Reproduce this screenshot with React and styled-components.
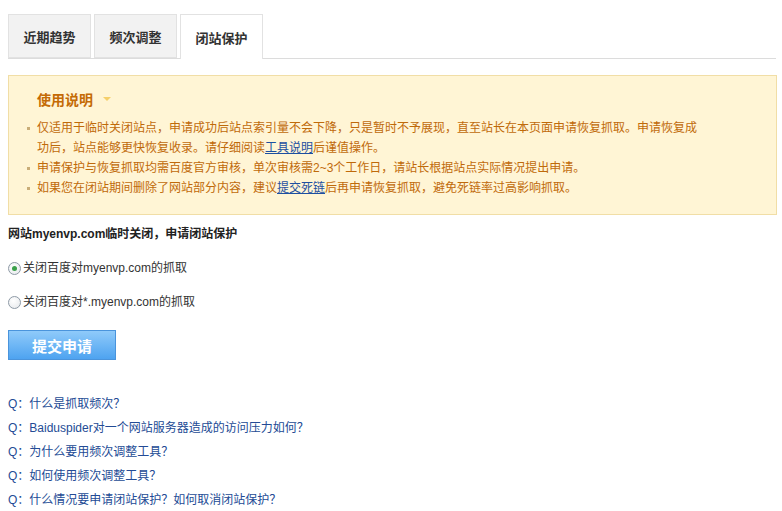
import React, { useState } from "react";
import styled, { createGlobalStyle } from "styled-components";

const GlobalStyle = createGlobalStyle`
  body {
    margin: 0;
    background: #fff;
    font-family: "Liberation Sans", "Noto Sans CJK SC", sans-serif;
    font-size: 12px;
    color: #333;
  }
`;

const Page = styled.div`
  padding: 14px 5px 0 8px;
`;

const TabBar = styled.div`
  display: flex;
  gap: 3px;
  height: 44px;
  border-bottom: 1px solid #dcdcdc;
  margin-right: 1px;
`;

const Tab = styled.div`
  width: 83px;
  height: ${(p) => (p.active ? "45px" : "44px")};
  box-sizing: border-box;
  display: flex;
  align-items: center;
  justify-content: center;
  background: ${(p) => (p.active ? "#fff" : "#f2f2f2")};
  border: 1px solid #e2e2e2;
  border-bottom: ${(p) => (p.active ? "none" : "1px solid #e2e2e2")};
  font-size: 13px;
  font-weight: bold;
  color: #333;
  cursor: pointer;
`;

const Notice = styled.div`
  margin-top: 16px;
  background: #fff5d5;
  border: 1px solid #f1dea6;
  padding: 11px 0 16px 17px;
`;

const NoticeTitle = styled.div`
  display: flex;
  align-items: center;
  gap: 10px;
  padding-left: 11px;
  height: 24px;
  font-size: 14px;
  font-weight: bold;
  color: #c46a05;
`;

const Arrow = styled.span`
  width: 0;
  height: 0;
  border-left: 4px solid transparent;
  border-right: 4px solid transparent;
  border-top: 4px solid #f5cf6a;
`;

const NoticeList = styled.ul`
  list-style: none;
  margin: 7px 0 0;
  padding: 0 0 0 11px;
  width: 666px;
`;

const NoticeItem = styled.li`
  position: relative;
  line-height: 20px;
  color: #bf6a0a;
  &::before {
    content: "";
    position: absolute;
    left: -10px;
    top: 9px;
    width: 3px;
    height: 3px;
    background: #c9ad78;
  }
`;

const Link = styled.a`
  color: #1d4fa0;
  text-decoration: underline;
`;

const Heading = styled.div`
  margin-top: 11px;
  font-weight: bold;
  color: #222;
  line-height: 16px;
`;

const Options = styled.div`
  margin-top: 18px;
  display: flex;
  flex-direction: column;
  gap: 18px;
`;

const Option = styled.label`
  display: flex;
  align-items: center;
  gap: 2px;
  height: 16px;
  line-height: 16px;
  color: #333;
  cursor: pointer;
`;

const RadioDot = styled.span`
  width: 11px;
  height: 11px;
  border-radius: 50%;
  border: 1px solid #8e9aa6;
  background: radial-gradient(circle at 40% 35%, #fff, #e4e7ea);
  display: flex;
  align-items: center;
  justify-content: center;
  &::after {
    content: "";
    width: 5px;
    height: 5px;
    border-radius: 50%;
    background: ${(p) => (p.checked ? "#3aa04a" : "transparent")};
  }
`;

const SubmitButton = styled.button`
  display: block;
  margin-top: 20px;
  width: 108px;
  height: 30px;
  border: 1px solid #4a94dc;
  background: linear-gradient(#8fcafa, #4ea3f0);
  color: #fff;
  font-family: "Noto Sans CJK SC", sans-serif;
  font-size: 15px;
  font-weight: bold;
  cursor: pointer;
`;

const FaqList = styled.div`
  margin-top: 32px;
  display: flex;
  flex-direction: column;
`;

const FaqLink = styled.a`
  line-height: 24px;
  color: #234b95;
  text-decoration: none;
`;

const faqs = [
  "Q：什么是抓取频次？",
  "Q：Baiduspider对一个网站服务器造成的访问压力如何？",
  "Q：为什么要用频次调整工具？",
  "Q：如何使用频次调整工具？",
  "Q：什么情况要申请闭站保护？如何取消闭站保护？",
];

const App = () => {
  const [choice, setChoice] = useState(0);
  const tabs = ["近期趋势", "频次调整", "闭站保护"];

  return (
    <Page>
      <GlobalStyle />
      <TabBar>
        {tabs.map((t, i) => (
          <Tab key={t} active={i === 2}>
            {t}
          </Tab>
        ))}
      </TabBar>

      <Notice>
        <NoticeTitle>
          使用说明
          <Arrow />
        </NoticeTitle>
        <NoticeList>
          <NoticeItem>
            仅适用于临时关闭站点，申请成功后站点索引量不会下降，只是暂时不予展现，直至站长在本页面申请恢复抓取。申请恢复成功后，站点能够更快恢复收录。请仔细阅读
            <Link href="#">工具说明</Link>后谨值操作。
          </NoticeItem>
          <NoticeItem>
            申请保护与恢复抓取均需百度官方审核，单次审核需2~3个工作日，请站长根据站点实际情况提出申请。
          </NoticeItem>
          <NoticeItem>
            如果您在闭站期间删除了网站部分内容，建议<Link href="#">提交死链</Link>
            后再申请恢复抓取，避免死链率过高影响抓取。
          </NoticeItem>
        </NoticeList>
      </Notice>

      <Heading>网站myenvp.com临时关闭，申请闭站保护</Heading>

      <Options>
        <Option onClick={() => setChoice(0)}>
          <RadioDot checked={choice === 0} />
          关闭百度对myenvp.com的抓取
        </Option>
        <Option onClick={() => setChoice(1)}>
          <RadioDot checked={choice === 1} />
          关闭百度对*.myenvp.com的抓取
        </Option>
      </Options>

      <SubmitButton>提交申请</SubmitButton>

      <FaqList>
        {faqs.map((q) => (
          <FaqLink key={q} href="#">
            {q}
          </FaqLink>
        ))}
      </FaqList>
    </Page>
  );
};

export default App;
